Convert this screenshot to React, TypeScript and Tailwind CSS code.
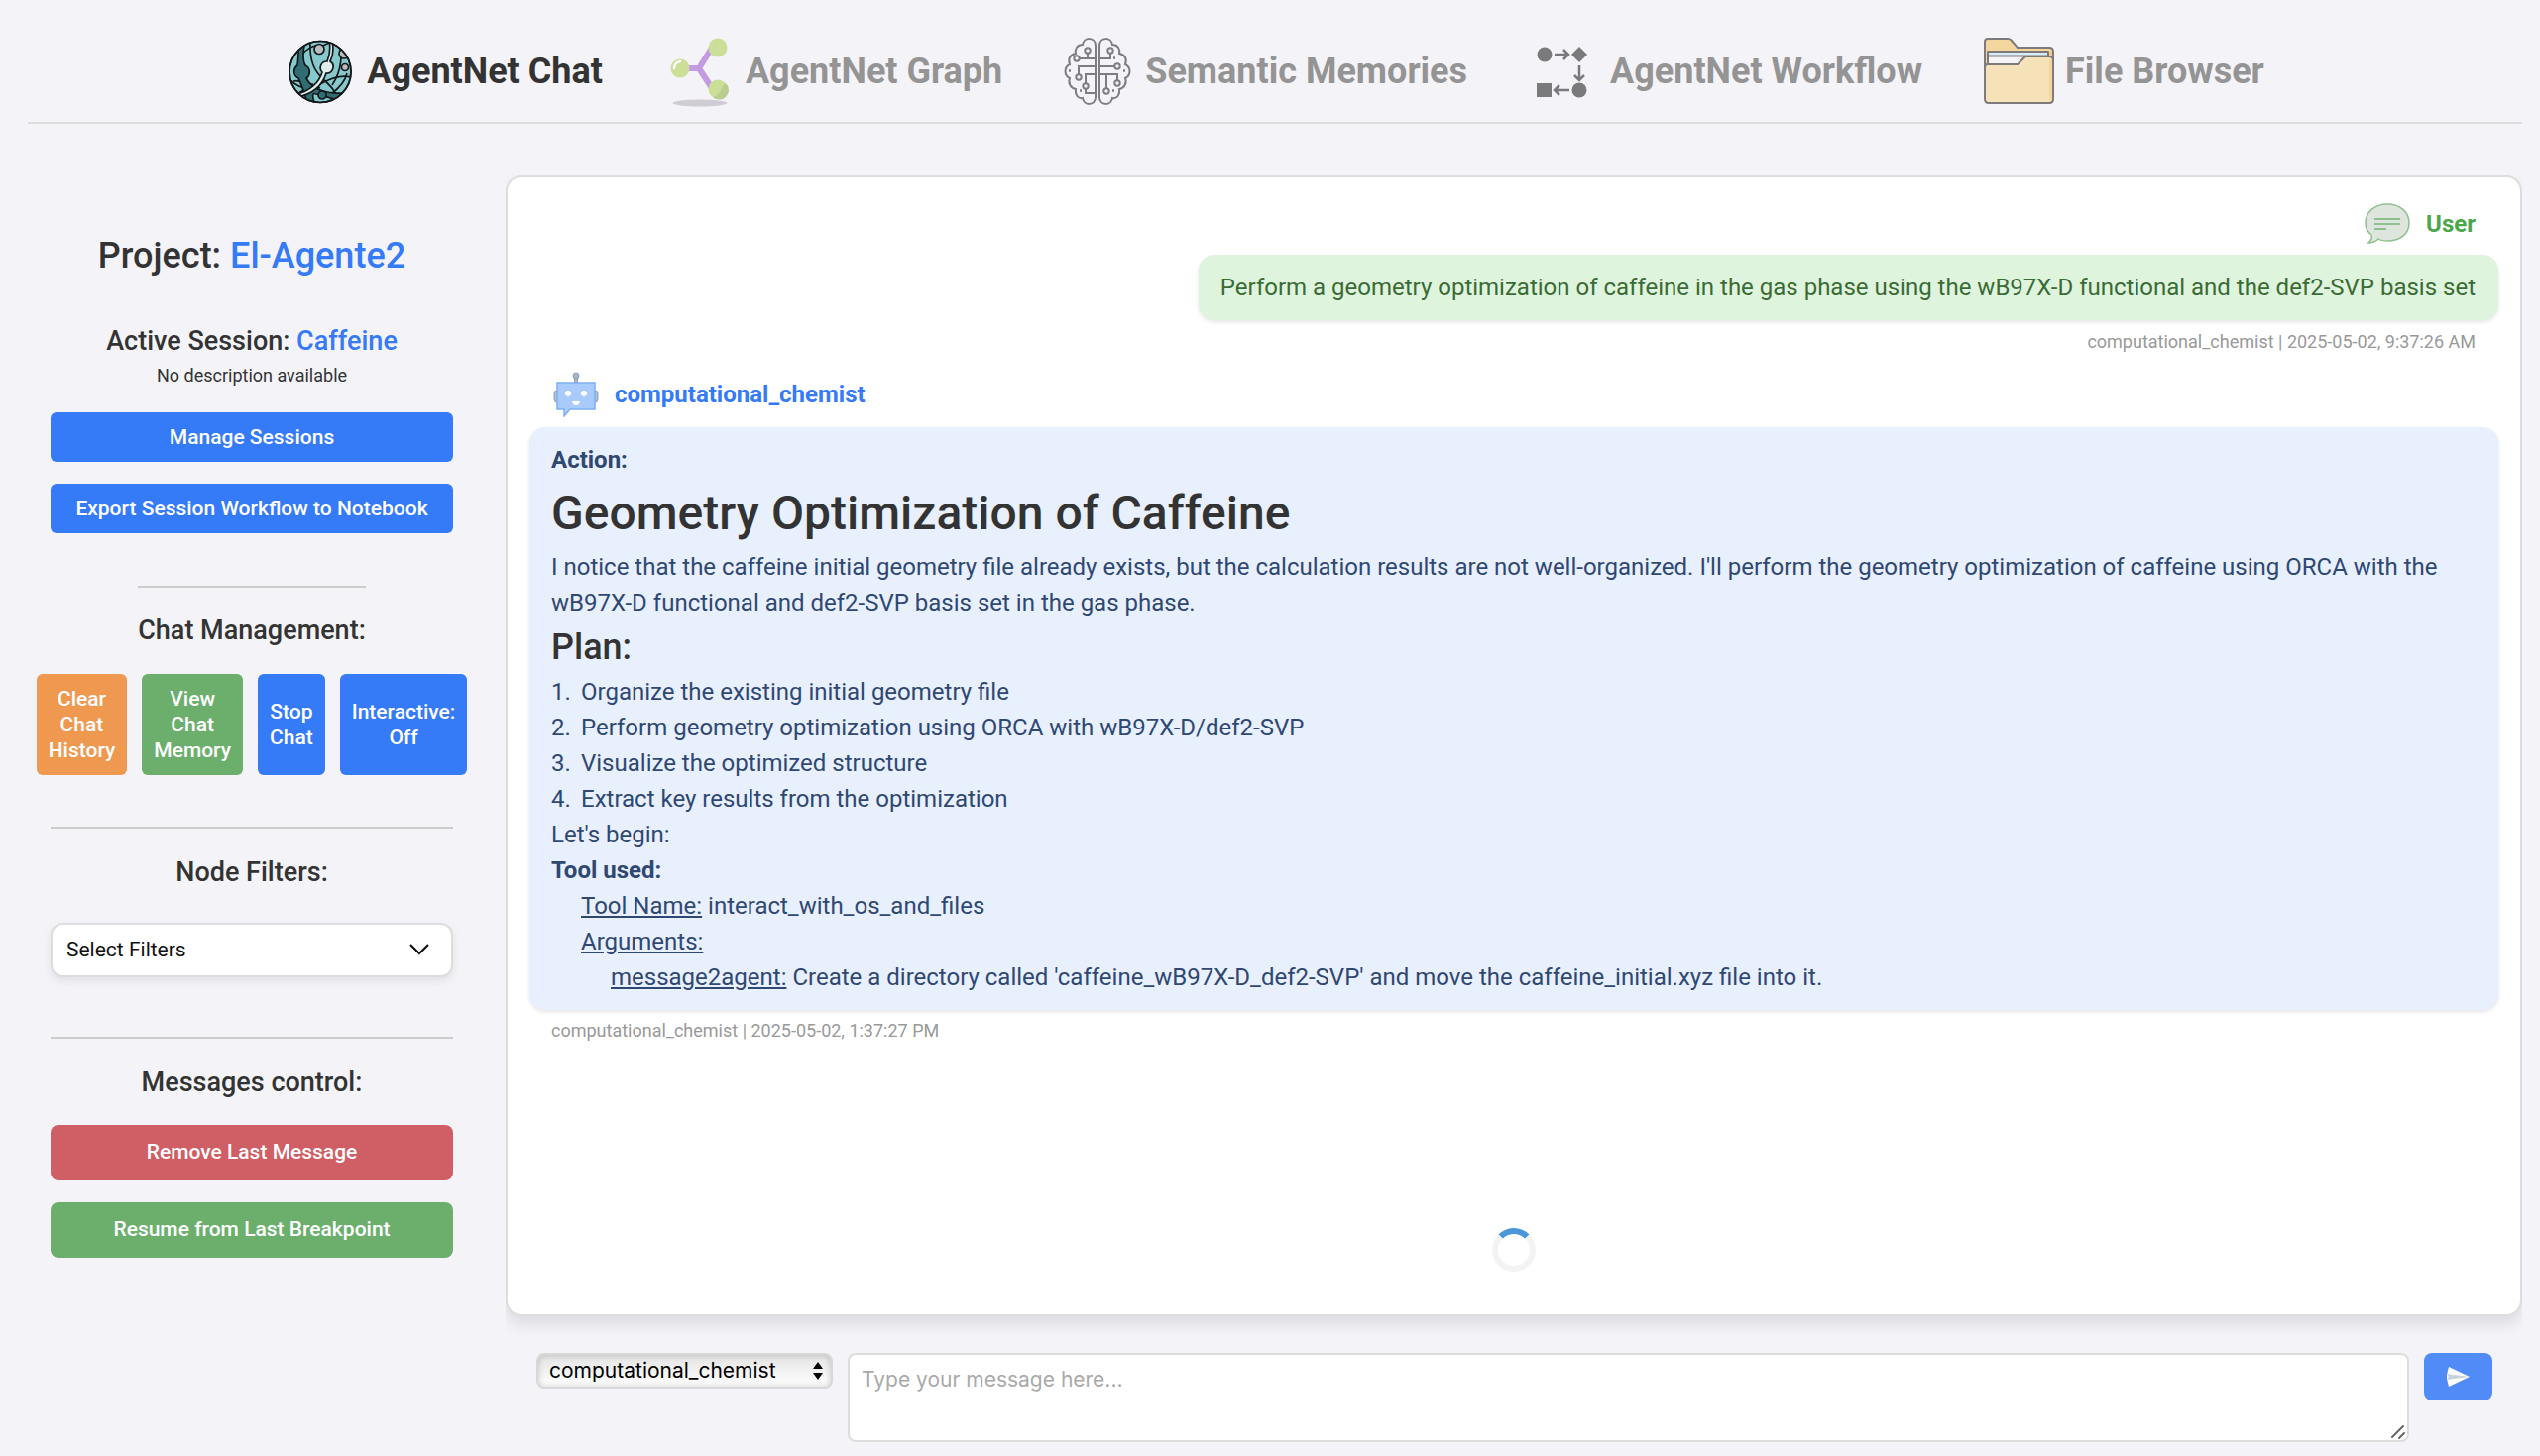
import type { ReactNode } from "react";

const robotoFont = "font-[Roboto,'Liberation_Sans',sans-serif]";

function AgentIcon() {
    return (
        <svg viewBox="-1 -1 78 78" className="w-[78px] h-[78px] -m-[5px]" fill="none" stroke="#14181a" strokeWidth="1.7">
            <defs>
                <clipPath id="globe"><circle cx="39" cy="38.5" r="31" /></clipPath>
            </defs>
            <circle cx="39" cy="38.5" r="31" fill="#86c9cd" />
            <g clipPath="url(#globe)">
                <path d="M29 7C28 28 33 38 43 47S55 60 58 70" />
                <path d="M8 46C17 55 27 58 39 51S64 41 72 45" />
                <path d="M57 6C62 20 61 37 51 52" />
                <path d="M66 40C64 49 58 55 50 61" />
                <path d="M34 12C24 15 18 23 17 33M42 12C47 9 51 8 56 8" />
                <path d="M15 62C25 54 30 52 39 55M12 48C19 46 24 52 32 51" />
                <path d="M18 8C17 17 17 25 16 32A7.5 7.5 0 0 0 17 45C21 53 23 61 26 69L33 69C31 63 31 59 35 61C40 62 50 66 59 67L62 60C54 60 51 61 42 58C32 55 28 51 25 45A7.5 7.5 0 0 0 24 32C21 27 22 16 24 7Z" fill="#2f6d72" />
                <path d="M48 7C50 17 48 23 46 28A6.5 6.5 0 0 0 41 39C38 49 29 58 15 61L16 64C31 61 41 53 45 40A6.5 6.5 0 0 0 49 28C52 22 53 16 51 7Z" fill="#e1eeee" />
                <circle cx="38" cy="15.5" r="5" fill="#b9bbbc" />
                <circle cx="63" cy="20" r="5" fill="#b9bbbc" />
                <circle cx="64" cy="34" r="3.5" fill="#b9bbbc" />
                <circle cx="41" cy="62" r="4" fill="#2f6d72" />
            </g>
            <circle cx="39" cy="38.5" r="31" />
        </svg>
    );
}

function GraphIcon() {
    return (
        <svg viewBox="0 0 68 72" className="w-[68px] h-[72px]">
            <path d="M16 33H35M35 33L50 9M35 33L52 59" stroke="#c49be0" strokeWidth="6" fill="none" />
            <circle cx="16" cy="33" r="9.5" fill="#cbdf98" />
            <path d="M10 33A7 7 0 0 1 16 26" stroke="#fff" strokeWidth="2.5" fill="none" strokeLinecap="round" />
            <circle cx="54" cy="12" r="9.5" fill="#cbdf98" />
            <circle cx="54" cy="54" r="9.5" fill="#cbdf98" />
            <path d="M62 48A9.5 9.5 0 0 1 49 62C58 60 56 52 62 48Z" fill="#b9cd8e" />
            <ellipse cx="36" cy="68" rx="27.5" ry="3.5" fill="#cfcdd3" />
        </svg>
    );
}

function BrainIcon() {
    return (
        <svg viewBox="0 0 68 70" className="w-[68px] h-[70px]" fill="none" stroke="#7e7d82" strokeWidth="2">
            <path d="M32 9C32 0 20 0 19 8C13 8 11 13 12 17C6 18 4 23 6 28C0 31 0 39 6 42C4 47 7 52 12 53C11 58 14 63 19 62C20 70 32 70 32 61Z" />
            <path d="M36 9C36 0 48 0 49 8C55 8 57 13 56 17C62 18 64 23 62 28C68 31 68 39 62 42C64 47 61 52 56 53C57 58 54 63 49 62C48 70 36 70 36 61Z" />
            {/* Circuit traces */}
            <path d="M24 17V22M16 22H32M32 30H15V38M32 38H22V47M22 52V57H32" />
            <path d="M36 22H47V17M36 30H51M36 38H54V44M43 38V52" />
            <circle cx="24" cy="14" r="2.7" />
            <circle cx="13" cy="22" r="2.7" />
            <circle cx="15" cy="41" r="2.7" />
            <circle cx="22" cy="50" r="2.7" />
            <circle cx="47" cy="14" r="2.7" />
            <circle cx="54" cy="30" r="2.7" />
            <circle cx="54" cy="47" r="2.7" />
            <circle cx="43" cy="55" r="2.7" />
            <path d="M51 21V22M61 34V35M50 54V55M6 34V35M17 54V55" strokeLinecap="round" />
        </svg>
    );
}

function WorkflowIcon() {
    return (
        <svg viewBox="0 0 68 68" className="w-[68px] h-[68px]" fill="#7a7a7c">
            <circle cx="16" cy="17" r="7.5" />
            <path d="M51 9L59 17L51 25L43 17Z" />
            <circle cx="51" cy="53" r="7.5" />
            <rect x="8" y="46" width="15" height="14" />
            <path d="M26 17H39M35 12L40 17L35 22M51 28V42M46 38L51 43L56 38M41 53H27M31 48L26 53L31 58" fill="none" stroke="#7a7a7c" strokeWidth="2.5" />
        </svg>
    );
}

function FolderIcon() {
    return (
        <svg viewBox="1 1 72 68" className="w-[72px] h-[68px] -mr-1" stroke="#7d7a7b" strokeWidth="2" strokeLinejoin="round">
            <path d="M2 62V5Q2 2 5 2H25Q28 2 29 4L35 11H67Q71 11 71 15V62Z" fill="#f4d79e" />
            <rect x="67" y="15" width="3" height="8" fill="#f5c78f" stroke="none" />
            <path d="M5 15H66V24H5Z" fill="#d8ecfa" />
            <path d="M5 19.5H66V40H5Z" fill="#f5f3f8" />
            <path d="M2 31Q2 28 5 28H35L43 20H67Q71 20 71 24V63Q71 67 67 67H6Q2 67 2 63Z" fill="#f6e2b8" />
            <path d="M68.5 23V64" stroke="#f3d79d" strokeWidth="3" />
        </svg>
    );
}

function UserIcon() {
    return (
        <svg viewBox="0 0 46 42" className="w-[46px] h-[42px]" stroke="#8fc08f" strokeWidth="1.5">
            <path d="M23 1C36 1 45 9 45 20S36 38 23 38C19 38 17 38 14 36C11 39 8 40 4 40C7 37 8 34 7 32C3 29 1 25 1 20C1 9 10 1 23 1Z" fill="#dde5dd" />
            <path d="M10 16H36M10 21H36M10 26H22" strokeWidth="2" />
        </svg>
    );
}

function RobotIcon() {
    return (
        <svg viewBox="0 0 46 46" className="w-[46px] h-[46px]">
            <rect x="1" y="19" width="6" height="12" rx="3" fill="#b3c0d0" stroke="#8c9fb8" />
            <rect x="39" y="19" width="6" height="12" rx="3" fill="#b3c0d0" stroke="#8c9fb8" />
            <path d="M21.5 5H24.5V11H21.5Z" fill="#b3c0d0" stroke="#8c9fb8" />
            <circle cx="23" cy="4" r="3" fill="#a5b4c8" stroke="#8c9fb8" />
            <path d="M4 11H42V38H17L11 45V38H4Z" fill="#a8cbfc" stroke="#7fb0f3" strokeWidth="1.5" />
            <circle cx="15" cy="22" r="3" fill="#fff" />
            <circle cx="31" cy="22" r="3" fill="#fff" />
            <path d="M19 30H27Q26 34 23 34T19 30Z" fill="#fff" />
        </svg>
    );
}

const tabs = [
    { href: "#chat", label: "AgentNet Chat", icon: <AgentIcon />, active: true },
    { href: "#graph", label: "AgentNet Graph", icon: <GraphIcon />, active: false },
    { href: "#memories", label: "Semantic Memories", icon: <BrainIcon />, active: false },
    { href: "#workflow", label: "AgentNet Workflow", icon: <WorkflowIcon />, active: false },
    { href: "#files", label: "File Browser", icon: <FolderIcon />, active: false },
];

const chatActions = [
    { lines: ["Clear", "Chat", "History"], color: "bg-[#ef9950]" },
    { lines: ["View", "Chat", "Memory"], color: "bg-[#6caf6d]" },
    { lines: ["Stop", "Chat"], color: "bg-[#357af6]" },
    { lines: ["Interactive:", "Off"], color: "bg-[#357af6]" },
];

const planSteps = [
    "Organize the existing initial geometry file",
    "Perform geometry optimization using ORCA with wB97X-D/def2-SVP",
    "Visualize the optimized structure",
    "Extract key results from the optimization",
];

function SectionTitle({ children }: { children: ReactNode }) {
    return <h3 className="text-[27px] leading-8 font-medium">{children}</h3>;
}

function Sidebar() {
    return (
        <aside className="w-[508px] shrink-0 flex flex-col items-center pt-[61px] text-center">
            {/* Project and session */}
            <h2 className="mb-[50px] text-4xl font-medium">
                Project: <span className="text-[#357af6]">El-Agente2</span>
            </h2>
            <SectionTitle>
                Active Session: <span className="text-[#357af6]">Caffeine</span>
            </SectionTitle>
            <p className="mt-[7px] text-lg leading-6">No description available</p>
            <div className="w-[406px] mt-[25px] flex flex-col gap-[22px] text-[21px] leading-[26px] font-medium text-white">
                <button className="h-[50px] rounded-md bg-[#357af6]">Manage Sessions</button>
                <button className="h-[50px] rounded-md bg-[#357af6]">Export Session Workflow to Notebook</button>
            </div>

            {/* Chat management */}
            <hr className="w-[230px] mt-[53px] mb-[27px] border-t-2 border-[#ccc]" />
            <SectionTitle>Chat Management:</SectionTitle>
            <div className="mt-7 flex gap-[15px] text-[21px] leading-[26px] font-medium text-white">
                {chatActions.map((action) => (
                    <button key={action.lines.join(" ")} className={`h-[102px] px-3 rounded-md ${action.color}`}>
                        {action.lines.map((line) => (
                            <span key={line} className="block">{line}</span>
                        ))}
                    </button>
                ))}
            </div>

            {/* Filters */}
            <hr className="w-[406px] mt-[52px] mb-7 border-t-2 border-[#ccc]" />
            <SectionTitle>
                <label htmlFor="filters">Node Filters:</label>
            </SectionTitle>
            <div className="relative w-[406px] mt-[35px]">
                <select id="filters" className="block appearance-none w-full h-[55px] pl-[14px] rounded-xl border-2 border-[#ddd] bg-white text-[21px] text-[#111] shadow-[0_4px_8px_rgba(0,0,0,0.08)]">
                    <option>Select Filters</option>
                </select>
                <svg viewBox="0 0 20 12" className="absolute right-6 top-[21px] w-5 h-3 pointer-events-none" fill="none" stroke="#111" strokeWidth="2.2">
                    <path d="M1 1L10 10L19 1" />
                </svg>
            </div>

            {/* Messages */}
            <hr className="w-[406px] mt-[60px] mb-7 border-t-2 border-[#ccc]" />
            <SectionTitle>Messages control:</SectionTitle>
            <div className="w-[406px] mt-[27px] flex flex-col gap-[22px] text-[21px] font-medium text-white">
                <button className="h-14 rounded-lg bg-[#d05e65]">Remove Last Message</button>
                <button className="h-14 rounded-lg bg-[#6caf6d]">Resume from Last Breakpoint</button>
            </div>
        </aside>
    );
}

function Messages() {
    return (
        <section className="flex-1 flex flex-col px-[22px] pt-6 pb-[43px] bg-white border-2 border-[#ddd] rounded-2xl shadow-[0_8px_16px_rgba(0,0,0,0.1)] text-2xl leading-9">
            {/* User message */}
            <article className="flex flex-col items-end">
                <header className="flex items-center gap-4 h-[46px] mb-2 pr-[23px] font-bold text-[#4ca64c]">
                    <UserIcon />
                    User
                </header>
                <p className="pl-[22px] pr-[23px] py-[15px] rounded-2xl bg-[#def4dd] text-[#3b6b35] shadow-[0_2px_4px_rgba(0,0,0,0.1)]">
                    Perform a geometry optimization of caffeine in the gas phase using the wB97X-D functional and the def2-SVP basis set
                </p>
                <footer className="mt-2 pr-[23px] text-lg leading-7 text-[#999]">computational_chemist | 2025-05-02, 9:37:26 AM</footer>
            </article>

            {/* Agent message */}
            <article className="mt-4">
                <header className="flex items-center gap-4 h-[46px] mb-[10px] pl-6 font-bold text-[#357af6]">
                    <RobotIcon />
                    computational_chemist
                </header>
                <div className="px-[22px] py-[15px] rounded-2xl bg-[#e8effd] text-[#2f4872] shadow-[0_2px_4px_rgba(0,0,0,0.1)]">
                    <p className="font-bold">Action:</p>
                    <h1 className="text-5xl leading-[72px] font-medium text-[#333]">Geometry Optimization of Caffeine</h1>
                    <p>
                        I notice that the caffeine initial geometry file already exists, but the calculation results are not well-organized. I'll perform the geometry optimization of caffeine using ORCA with the wB97X-D functional and def2-SVP basis set in the gas phase.
                    </p>
                    <h2 className="text-4xl leading-[54px] font-medium text-[#333]">Plan:</h2>
                    <ol>
                        {planSteps.map((step, i) => (
                            <li key={step} className="flex">
                                <span className="w-[30px]">{i + 1}.</span>
                                <span>{step}</span>
                            </li>
                        ))}
                    </ol>
                    <p>Let's begin:</p>
                    <p className="font-bold">Tool used:</p>
                    <div className="pl-[30px]">
                        <p><u>Tool Name:</u> interact_with_os_and_files</p>
                        <p><u>Arguments:</u></p>
                        <p className="pl-[30px]">
                            <u>message2agent:</u> Create a directory called 'caffeine_wB97X-D_def2-SVP' and move the caffeine_initial.xyz file into it.
                        </p>
                    </div>
                </div>
                <footer className="mt-[7px] pl-[22px] text-lg leading-7 text-[#999]">computational_chemist | 2025-05-02, 1:37:27 PM</footer>
            </article>

            {/* Loading spinner */}
            <div className="mt-auto mx-auto w-11 h-11 rounded-full border-[6px] border-[#f3f3f3] border-t-[#4b96d8]"></div>
        </section>
    );
}

function Composer() {
    return (
        <form className="flex items-start gap-[15px] pl-[31px] pr-[30px] pt-[13px] pb-[14px] font-[Inter,'Liberation_Sans',sans-serif] text-[21px]">
            <div className="relative w-[299px] shrink-0">
                <select aria-label="Agent" className="block appearance-none w-full h-9 pl-[11px] rounded-lg border-2 border-[#d8d8d8] bg-linear-to-b from-[#e4e4e4] to-white text-black shadow-[inset_0_0_6px_rgba(0,0,0,0.2)]">
                    <option>computational_chemist</option>
                </select>
                <svg viewBox="0 0 10 20" className="absolute right-[10px] top-2 w-[10px] h-5 pointer-events-none">
                    <path d="M5 1L10 8H0ZM5 19L0 12H10Z" />
                </svg>
            </div>
            <div className="relative flex-1">
                <textarea
                    aria-label="Message"
                    placeholder="Type your message here..."
                    className="block w-full h-[90px] px-3 py-[11px] resize-none rounded-lg border-2 border-[#ddd] bg-white leading-7 placeholder:text-[#a9a9a9]"
                />
                <svg viewBox="0 0 16 16" className="absolute right-[3px] bottom-[2px] w-4 h-4 pointer-events-none" stroke="#666" strokeWidth="2" strokeLinecap="round">
                    <path d="M2 13L13 2M9 14L14 9" />
                </svg>
            </div>
            <button type="button" aria-label="Send" className="w-[69px] h-12 flex items-center justify-center rounded-lg bg-[#518bf8]">
                <svg viewBox="0 0 24 20" className="w-6 h-5">
                    <path d="M2 0L23 10L2 20L0 12V8Z" fill="#fff" />
                    <path d="M0 7L23 10L0 13L2 10Z" fill="#c9d3dd" />
                </svg>
            </button>
        </form>
    );
}

export default function App() {
    return (
        <div className={`min-h-screen flex flex-col bg-[#f4f3f8] text-[#333] ${robotoFont}`}>
            <nav className="ml-7 mr-[18px] pt-[21px] h-[125px] flex justify-center items-start gap-[62px] border-b-2 border-[#ddd] text-4xl font-bold">
                {tabs.map((tab) => (
                    <a key={tab.href} href={tab.href} className={`h-[102px] flex items-center gap-[14px] ${tab.active ? "text-[#333]" : "text-[#949494]"}`}>
                        {tab.icon}
                        {tab.label}
                    </a>
                ))}
            </nav>

            <div className="flex-1 flex pt-[52px]">
                <Sidebar />
                <main className="flex-1 flex flex-col ml-[2px] mr-[18px]">
                    <div className="flex-1 flex flex-col pb-6 overflow-hidden">
                        <Messages />
                    </div>
                    <Composer />
                </main>
            </div>
        </div>
    );
}
